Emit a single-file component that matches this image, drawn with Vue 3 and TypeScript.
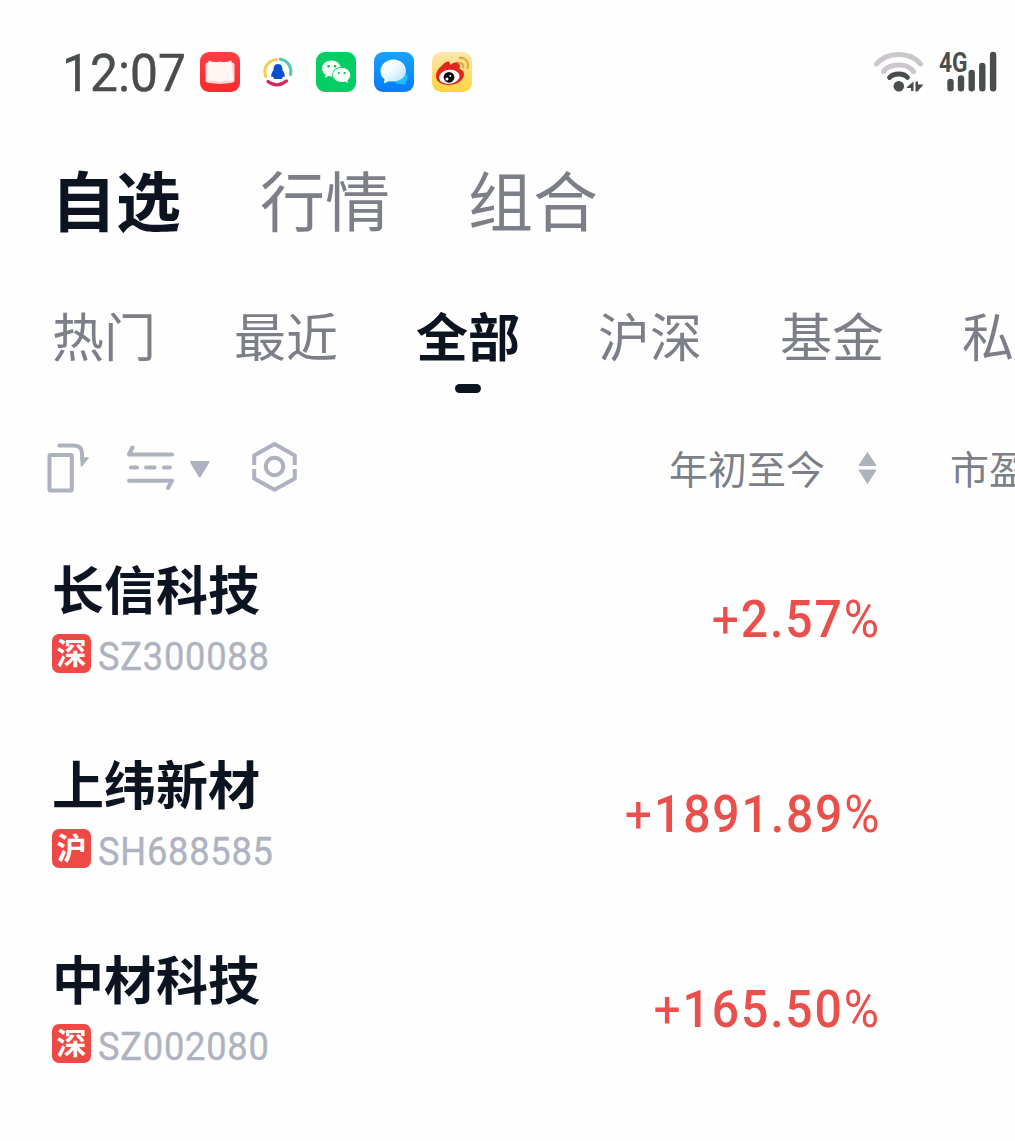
<script setup lang="ts">
interface Stock {
  name: string
  badge: string
  code: string
  change: string
}

const sections: string[] = ['自选', '行情', '组合']
const groups: string[] = ['热门', '最近', '全部', '沪深', '基金', '私']
const activeSection = '自选'
const activeGroup = '全部'

const stocks: Stock[] = [
  { name: '长信科技', badge: '深', code: 'SZ300088', change: '2.57' },
  { name: '上纬新材', badge: '沪', code: 'SH688585', change: '1891.89' },
  { name: '中材科技', badge: '深', code: 'SZ002080', change: '165.50' },
]
</script>

<template>
  <div class="screen">
    <header class="status">
      <span class="clock">12:07</span>
      <div class="apps">
        <svg class="app" viewBox="0 0 40 40">
          <defs>
            <linearGradient id="gRed" x1="0" y1="0" x2="0" y2="1"><stop offset="0" stop-color="#ff3f45" /><stop offset="1" stop-color="#f82b2b" /></linearGradient>
          </defs>
          <rect width="40" height="40" rx="9" fill="url(#gRed)" />
          <path d="M5.500 12.500Q5.500 10.500 8 10.500H32Q34.500 10.500 34.500 12.500V28.500Q34.500 30.500 32 30.800Q20 33 8 30.800Q5.500 30.500 5.500 28.500Z" fill="#ffd6d2" />
          <path d="M8.500 8.500Q15 11 20 9.500Q25 11 31.500 8.500L33.500 28.500Q26 28 20 29.500Q14 28 6.500 28.500Z" fill="#fff5f2" />
        </svg>
        <svg class="app" viewBox="0 0 40 40">
          <g fill="none" stroke-width="3.200" stroke-linecap="round">
            <path d="M7.800 24.500C4.500 15.500 10.500 8.500 18.500 7.500" stroke="#f2cf55" />
            <path d="M22.500 7.200C30.500 9 34 15.500 32.500 22.500" stroke="#56c9ae" />
            <path d="M10 29.500Q19 36.500 28.500 29" stroke="#d82457" />
          </g>
          <path d="M20 12C16.500 12 15.500 15 15.500 18C14 20.500 12.500 23 13.500 25L15 24.500Q15.500 26 16.500 27H23.500Q24.500 26 25 24.500L26.500 25C27.500 23 26 20.500 24.500 18C24.500 15 23.500 12 20 12Z" fill="#0a4fd0" />
        </svg>
        <svg class="app" viewBox="0 0 40 40">
          <rect width="40" height="40" rx="9" fill="#05ce65" />
          <path d="M15.500 8.500C10.200 8.500 6 12 6 16.500C6 19 7.400 21.300 9.500 22.700L9 26L12.500 24Q14 24.500 16.500 24.400C15.500 19 20 15 24.800 15C23.800 11.200 20 8.500 15.500 8.500Z" fill="#f5fff8" />
          <path d="M25.600 15.800C20.800 15.800 17 19 17 23C17 27 20.800 30 25.600 30Q27.500 30 29 29.400L32 31L31.400 28.200C33.200 27 34.200 25 34.200 23C34.200 19 30.400 15.800 25.600 15.800Z" fill="#f5fff8" />
          <g fill="#05b558"><circle cx="12.500" cy="14.200" r="1.200" /><circle cx="19" cy="14.200" r="1.200" /><circle cx="22.800" cy="21" r="1.100" /><circle cx="28.600" cy="21" r="1.100" /></g>
        </svg>
        <svg class="app" viewBox="0 0 40 40">
          <defs>
            <linearGradient id="gBlue" x1="0" y1="0" x2="0" y2="1"><stop offset="0" stop-color="#1aa2ff" /><stop offset="1" stop-color="#047cfb" /></linearGradient>
            <linearGradient id="gBubble" x1="0" y1="0" x2="1" y2="1"><stop offset="0.400" stop-color="#f7fdff" /><stop offset="1" stop-color="#a9dcff" /></linearGradient>
          </defs>
          <rect width="40" height="40" rx="9" fill="url(#gBlue)" />
          <path d="M33 22C34.500 26 33 29 31 30.500L31.500 33L27.500 32C24 32.500 21 31 19.500 29Z" fill="#22bdff" />
          <path d="M19.500 7.500C12.500 7.500 6.500 12.500 6.500 19Q6.500 24 10.500 27L10 31.500L15 29.200C24 31 32 26 32 19C32 12.500 26.500 7.500 19.500 7.500Z" fill="url(#gBubble)" />
        </svg>
        <svg class="app" viewBox="0 0 40 40">
          <defs>
            <linearGradient id="gGold" x1="0" y1="0" x2="0" y2="1"><stop offset="0" stop-color="#fce7ad" /><stop offset="1" stop-color="#ffd43f" /></linearGradient>
          </defs>
          <rect width="40" height="40" rx="9" fill="url(#gGold)" />
          <path d="M4 24.500C4 19 7.500 15.500 9.500 14C12 11 15 9 17 9.500Q18.300 10.500 18 13Q22 9.500 26 10.500Q28.500 12 27.500 17Q32 18 32 22.500C31.500 29 24 33 17 33C10 33 4 30 4 24.500Z" fill="#e1251d" />
          <ellipse cx="17.300" cy="24.800" rx="10.300" ry="7" transform="rotate(-7 17.300 24.800)" fill="#fff" />
          <circle cx="17" cy="25.300" r="5.400" fill="#080808" />
          <circle cx="15" cy="27" r="1.500" fill="#fff" /><circle cx="18.300" cy="24" r=".9" fill="#fff" />
          <path d="M27.500 6C33 5 37.500 10.500 35.500 16M27 11Q31.800 10.500 31.300 15.500" fill="none" stroke="#eba23a" stroke-width="2.100" stroke-linecap="round" />
        </svg>
      </div>
      <div class="radio">
        <svg class="wifi" viewBox="0 0 52 42">
          <g fill="none" stroke-linecap="round">
            <path d="M3.500 13Q11.500 3.500 25.800 3.500T47.500 13" stroke="#cbc6cc" stroke-width="5" />
            <path d="M10.500 20.500Q15.500 14 25.800 14T40.500 20.500" stroke="#cbc6cc" stroke-width="5" />
            <path d="M16.500 26.500Q20 23 25.800 23T34.500 26.500" stroke="#494e4c" stroke-width="4.800" />
          </g>
          <circle cx="25.800" cy="35.300" r="5.300" fill="#494e4c" />
          <path d="M34 36L40.500 30.500V40H38V37H34ZM42.500 30.500H45V33.500H50.500L44.500 40.500H42.500Z" fill="#494e4c" />
        </svg>
        <svg class="cell" viewBox="0 0 60 42">
          <path d="M11.500 31V37.300M22 27.500V37.300M32.700 22V37.300M43.300 15V37.300M54.100 4V37.300" stroke="#494e4c" stroke-width="6.400" stroke-linecap="round" />
          <text x="0" y="21" textLength="28.500" lengthAdjust="spacingAndGlyphs" class="net">4G</text>
        </svg>
      </div>
    </header>

    <nav class="sections">
      <span v-for="s in sections" :key="s" :class="{ active: s === activeSection }">{{ s }}</span>
    </nav>

    <nav class="groups">
      <span v-for="g in groups" :key="g" :class="{ active: g === activeGroup }">{{ g }}</span>
    </nav>

    <div class="toolbar">
      <svg class="tools" viewBox="0 0 260 54">
        <g fill="none" stroke="#adb2be" stroke-width="4" stroke-linejoin="round" stroke-linecap="round">
          <rect x="4.500" y="15" width="22.300" height="35.500" rx="1" />
          <path d="M14.300 5.500H29Q37 5.500 37 13.500V19" />
          <path d="M127 14.500H84L87.500 7.500M84 40.800H127L123 48" />
          <path d="M86 27.500H92M101 27.500H109.500M119 27.500H125" />
          <path d="M209.200 25V15.500L229.500 4L249.800 15.500V25M209.200 29V38.500L229.500 49.700L249.800 38.500V29" stroke-linecap="butt" />
          <circle cx="229.500" cy="26.500" r="8.700" />
        </g>
        <path d="M36 18H43L36.500 26Z" fill="#adb2be" stroke="#adb2be" stroke-width="1.500" stroke-linejoin="round" />
        <path d="M146 22H163.500L154.700 36.500Z" fill="#adb2be" stroke="#adb2be" stroke-width="2" stroke-linejoin="round" />
      </svg>
      <span class="col">年初至今</span>
      <svg class="sort" viewBox="0 0 20 34">
        <path d="M9.500 1.500L18 14.500H1ZM9.500 32.500L18 19H1Z" fill="#adb2be" stroke="#adb2be" stroke-linejoin="round" />
      </svg>
      <span class="col next">市盈</span>
    </div>

    <main class="list">
      <article v-for="s in stocks" :key="s.code" class="row">
        <div class="info">
          <div class="name">{{ s.name }}</div>
          <div class="meta">
            <span class="badge">{{ s.badge }}</span>
            <span class="code">{{ s.code }}</span>
          </div>
        </div>
        <div class="change"><span class="sign">+</span>{{ s.change }}<span class="sign">%</span></div>
      </article>
    </main>
  </div>
</template>

<style>
body {
  margin: 0;
  background: #fefefe;
}
</style>

<style scoped>
.screen {
  width: 1015px;
  height: 1141px;
  overflow: hidden;
  background: #fefefe;
  font-family: "Noto Sans CJK SC", sans-serif;
  color: #0d1421;
  white-space: nowrap;
}
.status {
  display: flex;
  align-items: center;
  height: 144px;
  padding: 0 16px 0 62px;
}
.clock {
  width: 138px;
  padding-top: 4px;
  font: 400 51px/60px Roboto, sans-serif;
  color: #494e4c;
  -webkit-text-stroke: 0.4px #494e4c;
  transform: scaleX(0.975);
  transform-origin: 0 50%;
}
.apps {
  display: flex;
  gap: 18px;
}
.app {
  width: 40px;
  height: 40px;
}
.radio {
  display: flex;
  gap: 14px;
  margin-left: auto;
}
.wifi {
  width: 52px;
  height: 42px;
}
.cell {
  width: 60px;
  height: 42px;
}
.net {
  font: 700 27px Roboto, sans-serif;
  fill: #494e4c;
  stroke: #fefefe;
  stroke-width: 2px;
  paint-order: stroke;
}
.sections {
  display: flex;
  gap: 78px;
  height: 112px;
  padding-left: 52px;
  font-size: 65px;
  line-height: 108px;
  color: #7c7f87;
}
.groups {
  display: flex;
  gap: 78px;
  height: 168px;
  padding-left: 52px;
  font-size: 52px;
  line-height: 158px;
  color: #7c7f87;
}
.sections .active,
.groups .active {
  color: #0d1421;
  font-weight: 700;
}
.sections .active {
  margin-left: -1px;
  margin-right: 1px;
}
.groups .active {
  position: relative;
}
.groups .active::after {
  content: "";
  position: absolute;
  left: 39px;
  top: 128px;
  width: 26px;
  height: 9px;
  border-radius: 5px;
  background: #0d1421;
}
.toolbar {
  display: flex;
  align-items: center;
  height: 88px;
  padding-left: 45px;
}
.tools {
  width: 260px;
  height: 54px;
  margin: 0 364px 2px 0;
  flex: none;
}
.col {
  flex: none;
  margin-bottom: 2px;
  font-size: 39px;
  line-height: 60px;
  color: #7c7f87;
}
.sort {
  flex: none;
  width: 20px;
  height: 34px;
  margin-left: 33px;
}
.next {
  margin-left: 72px;
}
.list {
  padding: 36px 136px 0 52px;
}
.row {
  display: flex;
  justify-content: space-between;
  height: 195px;
}
.name {
  height: 86px;
  font-size: 52px;
  font-weight: 700;
  line-height: 80px;
}
.meta {
  display: flex;
  align-items: center;
  gap: 7px;
  height: 39px;
}
.badge {
  width: 39px;
  height: 39px;
  border-radius: 7px;
  background: #ef4946;
  color: #fff;
  font-size: 30px;
  font-weight: 700;
  line-height: 34px;
  text-align: center;
}
.code {
  padding-top: 6px;
  margin-bottom: -1px;
  font: 400 39px/39px Roboto, sans-serif;
  letter-spacing: 0.8px;
  color: #afb3bf;
  -webkit-text-stroke: 0.4px #afb3bf;
  transform: scaleX(0.93);
  transform-origin: 0 50%;
}
.change {
  padding-top: 42px;
  margin-right: -2px;
  font: 500 52px/60px Roboto, sans-serif;
  letter-spacing: 2px;
  color: #e94f4b;
  transform: scaleX(0.925);
  transform-origin: 100% 50%;
}
.sign {
  font-weight: 400;
}
</style>
